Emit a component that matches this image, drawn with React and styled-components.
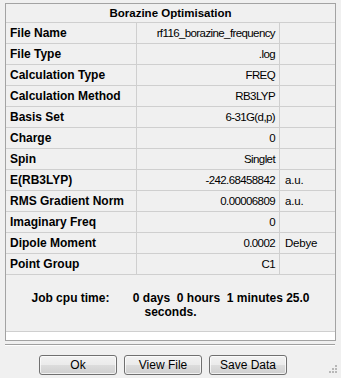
import React from 'react';
import styled, { createGlobalStyle } from 'styled-components';

const Global = createGlobalStyle`
  html, body {
    margin: 0;
    padding: 0;
    background: #f0f0f0;
  }
  body {
    font-family: "Liberation Sans", Arial, sans-serif;
    color: #000;
  }
`;

const Window = styled.div`
  position: relative;
  width: 341px;
  height: 378px;
  background: #f0f0f0;
  padding-top: 3px;
  box-sizing: border-box;
  overflow: hidden;
`;

const Frame = styled.div`
  margin-left: 5px;
  width: 331px;
  box-sizing: border-box;
  border: 1px solid #a3a3a3;
  background: #f0f0f0;
`;

const Title = styled.div`
  height: 18px;
  line-height: 18px;
  text-align: center;
  font-weight: bold;
  font-size: 11.5px;
  border-bottom: 1px solid #cfcfcf;
`;

const Row = styled.div`
  display: grid;
  grid-template-columns: 131px 143px 1fr;
  height: 21px;
  box-sizing: border-box;
  border-bottom: 1px solid #cfcfcf;
`;

const Label = styled.div`
  font-weight: bold;
  font-size: 12px;
  line-height: 20px;
  padding-left: 4px;
  border-right: 1px solid #cfcfcf;
  white-space: nowrap;
`;

const Value = styled.div`
  font-size: 11.5px;
  letter-spacing: -0.6px;
  line-height: 20px;
  text-align: right;
  padding-right: 4px;
  border-right: 1px solid #cfcfcf;
  white-space: nowrap;
`;

const Unit = styled.div`
  font-size: 11.5px;
  letter-spacing: -0.2px;
  line-height: 20px;
  padding-left: 5px;
  white-space: nowrap;
`;

const JobTime = styled.div`
  height: 56px;
  box-sizing: border-box;
  padding: 16px 16px 0 16px;
  text-align: center;
  font-weight: bold;
  font-size: 12px;
  line-height: 14px;
  white-space: pre-wrap;
`;

const Strip = styled.div`
  height: 8px;
  border-top: 1px solid #cfcfcf;
  background: #fff;
`;

const Separator = styled.div`
  margin: 3px 6px 0 5px;
  height: 1px;
  background: #a0a0a0;
  border-bottom: 1px solid #fff;
`;

const Buttons = styled.div`
  display: flex;
  gap: 7px;
  padding: 9px 0 0 39px;
`;

const Button = styled.button`
  width: 78px;
  height: 20px;
  padding: 0;
  box-sizing: border-box;
  border: 1px solid #707070;
  border-radius: 3px;
  background: linear-gradient(#f2f2f2 0%, #ebebeb 50%, #dddddd 50%, #cfcfcf 100%);
  box-shadow: inset 0 0 0 1px rgba(255, 255, 255, 0.7);
  font-family: "Liberation Sans", Arial, sans-serif;
  font-size: 12px;
  color: #000;
`;

const Grip = styled.svg`
  position: absolute;
  right: 3px;
  bottom: 4px;
`;

const rows = [
  ['File Name', 'rf116_borazine_frequency', ''],
  ['File Type', '.log', ''],
  ['Calculation Type', 'FREQ', ''],
  ['Calculation Method', 'RB3LYP', ''],
  ['Basis Set', '6-31G(d,p)', ''],
  ['Charge', '0', ''],
  ['Spin', 'Singlet', ''],
  ['E(RB3LYP)', '-242.68458842', 'a.u.'],
  ['RMS Gradient Norm', '0.00006809', 'a.u.'],
  ['Imaginary Freq', '0', ''],
  ['Dipole Moment', '0.0002', 'Debye'],
  ['Point Group', 'C1', ''],
];

export default function App() {
  return (
    <Window>
      <Global />
      <Frame>
        <Title>Borazine Optimisation</Title>
        {rows.map(([label, value, unit]) => (
          <Row key={label}>
            <Label>{label}</Label>
            <Value>{value}</Value>
            <Unit>{unit}</Unit>
          </Row>
        ))}
        <JobTime>{'Job cpu time:       0 days  0 hours  1 minutes 25.0 seconds.'}</JobTime>
        <Strip />
      </Frame>
      <Separator />
      <Buttons>
        <Button>Ok</Button>
        <Button>View File</Button>
        <Button>Save Data</Button>
      </Buttons>
      <Grip width="10" height="10" viewBox="0 0 10 10">
        <g fill="#b8b8b8">
          <rect x="7" y="1" width="2" height="2" />
          <rect x="4" y="4" width="2" height="2" />
          <rect x="7" y="4" width="2" height="2" />
          <rect x="1" y="7" width="2" height="2" />
          <rect x="4" y="7" width="2" height="2" />
          <rect x="7" y="7" width="2" height="2" />
        </g>
      </Grip>
    </Window>
  );
}
